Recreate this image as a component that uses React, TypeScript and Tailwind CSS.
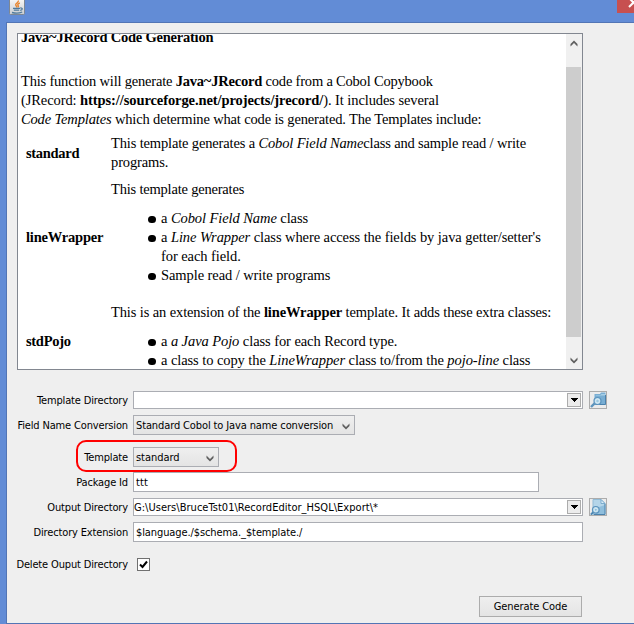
import type { ReactNode } from 'react';

function Chevron({ up = false }: { up?: boolean }) {
  return (
    <svg width="8" height="7" viewBox="0 0 8 7" className={up ? 'rotate-180' : ''}>
      <path d="M0.500 0.500L4 4L7.500 0.500V3L4 6.500L0.500 3z" fill="#606060" />
    </svg>
  );
}

function JavaIcon() {
  return (
    <svg width="16" height="16" viewBox="0 0 16 16">
      <defs>
        <linearGradient id="tile" x1="0" y1="0" x2="0" y2="1">
          <stop offset="0" stopColor="#fbfaf8" />
          <stop offset="1" stopColor="#c9cdd2" />
        </linearGradient>
      </defs>
      <rect x="0.500" y="-2" width="15" height="16.500" rx="1" fill="url(#tile)" stroke="#7d8794" />
      <path d="M9.300 0.500c.8 2-3 2.700-2.600 4.300.2.900 1 1.200 1 2.700M10.800 3c-2 .9-2.700 1.700-1.500 2.700.5.500 0 1.200-.6 1.600" fill="none" stroke="#e8862f" strokeWidth="1.400" />
      <path d="M4 8.300h7M4.800 10.200h5.400M3 12.500c3 .8 7.500.7 10.200-.5M11.300 8c2.700-.3 2.500 2-.1 2.400" fill="none" stroke="#4f7a9c" strokeWidth="1.300" />
    </svg>
  );
}

function SearchFolderIcon() {
  return (
    <svg width="16" height="16" viewBox="0 0 16 16">
      <path d="M4.500 2h5.500l1-1.500h4.500V13H4.500z" fill="#79aed3" />
      <path d="M5.500 3h5l1-1H15v1.500H6z" fill="#a9cfe6" />
      <path d="M15.500 3v9.500H9" fill="none" stroke="#4b82ad" />
      <path d="M4.800 11.200L1 15" stroke="#5f94bc" strokeWidth="2.400" />
      <circle cx="7.500" cy="9" r="3.500" fill="#c4e0ee" stroke="#5b93bd" strokeWidth="1.200" />
      <circle cx="7.500" cy="9" r="1.800" fill="#9cc8e0" stroke="#e0f0f8" strokeWidth="0.800" />
    </svg>
  );
}

function SearchFileIcon() {
  return (
    <svg width="16" height="16" viewBox="0 0 16 16">
      <path d="M3 .5h8l4 4v11H3z" fill="#b4d5e9" stroke="#93bcd7" />
      <path d="M6 9l9-3v9H6z" fill="#8fbedc" />
      <path d="M11 .5v4h4z" fill="#dceef8" stroke="#6a9fc5" strokeWidth="0.800" />
      <path d="M15 5v10.500H4" fill="none" stroke="#4b82ad" />
      <path d="M3.500 13L.8 15.600" stroke="#4d86b2" strokeWidth="2" />
      <circle cx="5.800" cy="10.800" r="3.300" fill="#c4e0ee" stroke="#5b93bd" strokeWidth="1.200" />
      <circle cx="5.800" cy="10.800" r="1.500" fill="#8dbfdd" stroke="#e0f0f8" strokeWidth="0.800" />
    </svg>
  );
}

function Row({ label, className = '', children }: { label: string; className?: string; children: ReactNode }) {
  return (
    <div className={`flex items-center ${className}`}>
      <div className="flex w-[121px] shrink-0 justify-end">{label}</div>
      <div className="ml-[5px] flex items-center">{children}</div>
    </div>
  );
}

function ComboField({ value = '', icon }: { value?: string; icon: ReactNode }) {
  return (
    <>
      <div className="flex h-[18px] w-[450px] items-center justify-between border border-[#abadb3] bg-white pr-px">
        <span className="tracking-[0.03px]">{value}</span>
        <div className="flex h-[14px] w-[14px] items-center justify-center border border-[#acacac] bg-[#ececec]">
          <svg width="7" height="4" viewBox="0 0 7 4">
            <path d="M0 0h7v1h-1v1h-1v1h-1v1h-1v-1h-1v-1h-1v-1h-1z" fill="#000" />
          </svg>
        </div>
      </div>
      <div className="ml-[6px] flex h-[18px] w-[18px] items-center justify-center border border-[#acacac] bg-[#ececec]">{icon}</div>
    </>
  );
}

function Bullet({ children }: { children: ReactNode }) {
  return (
    <li className="flex tracking-[-0.08px]">
      <span className="mt-[7px] mr-[5px] h-[7px] w-[8px] shrink-0 rounded-full bg-black" />
      <div>{children}</div>
    </li>
  );
}

export default function App() {
  return (
    <div className="flex h-[624px] w-[634px] flex-col overflow-hidden bg-[#628cd6] font-['DejaVu_Sans_Condensed','DejaVu_Sans',sans-serif] text-[11px] leading-[15px] tracking-[-0.15px] whitespace-nowrap text-black">
      {/* title bar */}
      <div className="flex h-[22px] shrink-0 justify-between pl-[9px]">
        <JavaIcon />
        <div className="flex h-[13px] w-[17px] justify-end overflow-hidden bg-[#c75050]">
          <svg width="6" height="8" viewBox="0 0 6 8">
            <path d="M1 -2l7 7M1 7l7 -7" stroke="#fff" strokeWidth="2" />
          </svg>
        </div>
      </div>

      <div className="ml-[6px] flex-1 border-t border-b border-l border-[#5275b5] bg-[#efefef] pt-[10px] pl-[10px]">
        {/* help text */}
        <div className="flex h-[337px] w-[566px] overflow-hidden border border-[#828790] bg-white">
          <div className="flex-1 overflow-hidden pl-[3px] font-['Liberation_Serif',serif] text-[14.5px] leading-[19px] tracking-[-0.12px]">
            <h1 className="-mt-[6px] font-bold tracking-[-0.22px]">Java~JRecord Code Generation</h1>
            <div className="mt-[25px]">
              <p className="tracking-[-0.2px]">This function will generate <b>Java~JRecord</b> code from a Cobol Copybook</p>
              <p className="tracking-[-0.09px]">(JRecord: <b>https://sourceforge.net/projects/jrecord/</b>). It includes several</p>
              <p className="tracking-[-0.15px]"><i>Code Templates</i> which determine what code is generated. The Templates include:</p>
            </div>
            <div className="mt-[5px] grid grid-cols-[85px_1fr] items-center gap-y-[8px] pl-[5px]">
              <b className="tracking-[-0.3px]">standard</b>
              <div>
                <p className="tracking-[-0.15px]">This template generates a <i>Cobol Field Name</i>class and sample read / write</p>
                <p>programs.</p>
              </div>
              <b className="tracking-[-0.2px]">lineWrapper</b>
              <div className="h-[115px]">
                <p className="tracking-[-0.2px]">This template generates</p>
                <ul className="mt-[10px] pl-[37px]">
                  <Bullet>a <i>Cobol Field Name</i> class</Bullet>
                  <Bullet>
                    a <i>Line Wrapper</i> class where access the fields by java getter/setter's<br />
                    for each field.
                  </Bullet>
                  <Bullet>Sample read / write programs</Bullet>
                </ul>
              </div>
              <b className="tracking-[-0.3px]">stdPojo</b>
              <div className="h-[77px]">
                <p>This is an extension of the <b>lineWrapper</b> template. It adds these extra classes:</p>
                <ul className="mt-[10px] pl-[37px]">
                  <Bullet>a <i>a Java Pojo</i> class for each Record type.</Bullet>
                  <Bullet>a class to copy the <i>LineWrapper</i> class to/from the <i>pojo-line</i> class</Bullet>
                </ul>
              </div>
            </div>
          </div>
          <div className="flex w-[16px] shrink-0 flex-col items-center bg-[#f0f0f0] pr-px">
            <div className="flex h-[33px] pt-[6px]"><Chevron up /></div>
            <div className="h-[270px] w-[15px] bg-[#cdcdcd]" />
            <div className="pt-[20px]"><Chevron /></div>
          </div>
        </div>

        {/* options form */}
        <div className="-ml-[10px] mt-[21px]">
          <Row label="Template Directory" className="h-[18px]">
            <ComboField icon={<SearchFolderIcon />} />
          </Row>
          <Row label="Field Name Conversion" className="mt-[6px] h-[20px]">
            <div className="flex h-[20px] w-[222px] items-center justify-between border border-[#abadb3] bg-linear-to-b from-[#efefef] to-[#e4e4e4] pr-[4px] pl-[2px]">
              <span className="tracking-[-0.12px]">Standard Cobol to Java name conversion</span>
              <div className="mt-[3px]"><Chevron /></div>
            </div>
          </Row>
          <div className="relative">
            <Row label="Template" className="mt-[12px] h-[20px]">
              <div className="flex h-[20px] w-[86px] items-center justify-between border border-[#abadb3] bg-linear-to-b from-[#efefef] to-[#e4e4e4] pr-[4px] pl-[2px]">
                <span className="tracking-[-0.05px]">standard</span>
                <div className="mt-[3px]"><Chevron /></div>
              </div>
            </Row>
            <div className="absolute -top-[7px] left-[69px] h-[32px] w-[161px] rounded-[10px] border-2 border-[#f00]" />
          </div>
          <Row label="Package Id" className="mt-[5px] h-[20px]">
            <div className="flex h-[20px] w-[406px] items-center border border-[#abadb3] bg-white pl-[2px] tracking-[0.1px]">ttt</div>
          </Row>
          <Row label="Output Directory" className="mt-[6px] h-[18px]">
            <ComboField value="G:\Users\BruceTst01\RecordEditor_HSQL\Export\*" icon={<SearchFileIcon />} />
          </Row>
          <Row label="Directory Extension" className="mt-[6px] h-[20px]">
            <div className="flex h-[20px] w-[450px] items-center border border-[#abadb3] bg-white pl-[2px] tracking-[-0.1px]">$language./$schema._$template./</div>
          </Row>
          <Row label="Delete Ouput Directory" className="mt-[12px] h-[20px]">
            <div className="ml-[4px] flex h-[13px] w-[13px] items-center justify-center border border-[#707070] bg-white">
              <svg width="9" height="9" viewBox="0 0 9 9">
                <path d="M1 4.500L3.500 7L8 1.500" fill="none" stroke="#000" strokeWidth="2" />
              </svg>
            </div>
          </Row>
          <div className="mt-[22px] ml-[472px] flex h-[21px] w-[103px] items-center justify-center border border-[#acacac] bg-linear-to-b from-[#efefef] to-[#e4e4e4] tracking-[-0.1px]">
            Generate Code
          </div>
        </div>
      </div>
    </div>
  );
}
